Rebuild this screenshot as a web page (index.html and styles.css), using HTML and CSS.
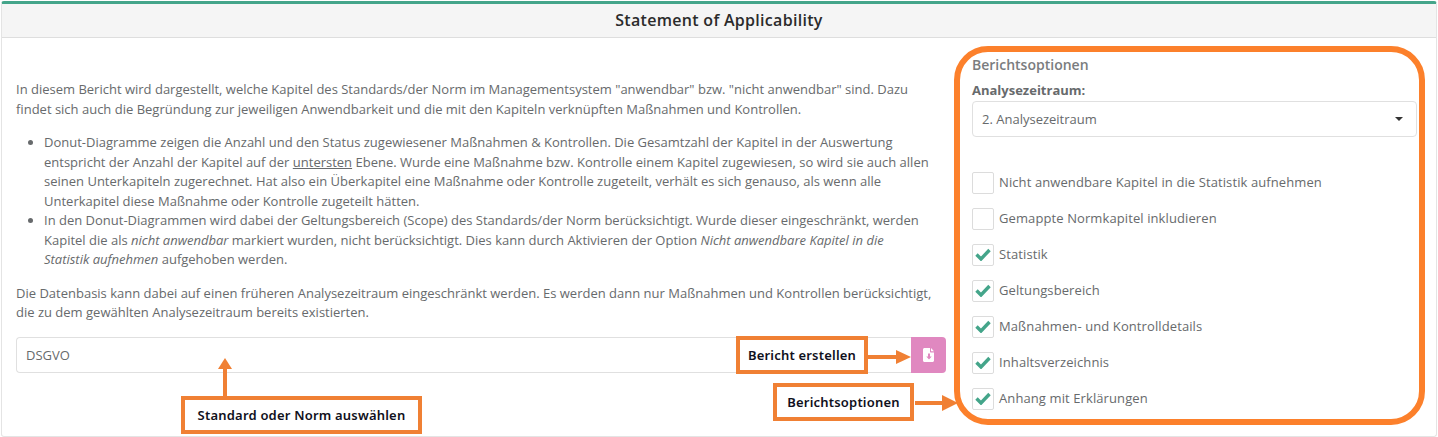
FILE: index.html
```html
<!DOCTYPE html>
<html lang="de">
<head>
    <meta charset="UTF-8">
    <meta name="viewport" content="width=device-width, initial-scale=1.0">
    <title>Statement of Applicability</title>
    <link rel="stylesheet" href="styles.css">
</head>
<body>
    <div class="card">
        <div class="card-header">Statement of Applicability</div>
        <div class="card-body">
            <div class="intro">
                <p>In diesem Bericht wird dargestellt, welche Kapitel des Standards/der Norm im Managementsystem "anwendbar" bzw. "nicht anwendbar" sind. Dazu findet sich auch die Begründung zur jeweiligen Anwendbarkeit und die mit den Kapiteln verknüpften Maßnahmen und Kontrollen.</p>
                <ul>
                    <li>Donut-Diagramme zeigen die Anzahl und den Status zugewiesener Maßnahmen &amp; Kontrollen. Die Gesamtzahl der Kapitel in der Auswertung entspricht der Anzahl der Kapitel auf der <u>untersten</u> Ebene. Wurde eine Maßnahme bzw. Kontrolle einem Kapitel zugewiesen, so wird sie auch allen seinen Unterkapiteln zugerechnet. Hat also ein Überkapitel eine Maßnahme oder Kontrolle zugeteilt, verhält es sich genauso, als wenn alle Unterkapitel diese Maßnahme oder Kontrolle zugeteilt hätten.</li>
                    <li>In den Donut-Diagrammen wird dabei der Geltungsbereich (Scope) des Standards/der Norm berücksichtigt. Wurde dieser eingeschränkt, werden Kapitel die als <em>nicht anwendbar</em> markiert wurden, nicht berücksichtigt. Dies kann durch Aktivieren der Option <em>Nicht anwendbare Kapitel in die Statistik aufnehmen</em> aufgehoben werden.</li>
                </ul>
                <p>Die Datenbasis kann dabei auf einen früheren Analysezeitraum eingeschränkt werden. Es werden dann nur Maßnahmen und Kontrollen berücksichtigt, die zu dem gewählten Analysezeitraum bereits existierten.</p>
                <div class="input-group">
                    <div class="input">DSGVO</div>
                    <button class="create-btn" aria-label="Bericht erstellen">
                        <svg width="12" height="14" viewBox="0 0 12 14">
                            <path fill="#fff" fill-rule="evenodd" d="M1.500 0H7v3.500c0 .6.4 1 1 1h3V12.500c0 .8-.7 1.500-1.500 1.500h-8C.7 14 0 13.300 0 12.500v-11C0 .7.700 0 1.500 0zM8 0l3 3.300H8.200L8 3.100zM5 5.500v3H3.300L6 11.500l2.700-3H7v-3z"/>
                        </svg>
                    </button>
                </div>
            </div>
            <div class="options">
                <h5>Berichtsoptionen</h5>
                <label class="field-label">Analysezeitraum:</label>
                <div class="select">2. Analysezeitraum<span class="caret"></span></div>
                <div class="checks">
                    <div class="check"><span class="box"></span>Nicht anwendbare Kapitel in die Statistik aufnehmen</div>
                    <div class="check"><span class="box"></span>Gemappte Normkapitel inkludieren</div>
                    <div class="check"><span class="box on"><svg width="16" height="13" viewBox="0 0 16 13"><path d="M1.500 6.500l4.500 4.500 8.500-9" fill="none" stroke="#44a58a" stroke-width="3.400"/></svg></span>Statistik</div>
                    <div class="check"><span class="box on"><svg width="16" height="13" viewBox="0 0 16 13"><path d="M1.500 6.500l4.500 4.500 8.500-9" fill="none" stroke="#44a58a" stroke-width="3.400"/></svg></span>Geltungsbereich</div>
                    <div class="check"><span class="box on"><svg width="16" height="13" viewBox="0 0 16 13"><path d="M1.500 6.500l4.500 4.500 8.500-9" fill="none" stroke="#44a58a" stroke-width="3.400"/></svg></span>Maßnahmen- und Kontrolldetails</div>
                    <div class="check"><span class="box on"><svg width="16" height="13" viewBox="0 0 16 13"><path d="M1.500 6.500l4.500 4.500 8.500-9" fill="none" stroke="#44a58a" stroke-width="3.400"/></svg></span>Inhaltsverzeichnis</div>
                    <div class="check"><span class="box on"><svg width="16" height="13" viewBox="0 0 16 13"><path d="M1.500 6.500l4.500 4.500 8.500-9" fill="none" stroke="#44a58a" stroke-width="3.400"/></svg></span>Anhang mit Erklärungen</div>
                </div>
            </div>
        </div>
    </div>

    <!-- annotations on top of the screenshot -->
    <div class="ring"></div>
    <div class="note note-create">Bericht erstellen</div>
    <div class="note note-options">Berichtsoptionen</div>
    <div class="note note-standard">Standard oder Norm auswählen</div>
    <svg class="arrows" width="1438" height="437" viewBox="0 0 1438 437">
        <g fill="#f08034">
            <rect x="868" y="355" width="30" height="4"/>
            <path d="M896 350l15 7-15 7z"/>
            <rect x="915" y="401" width="30" height="4"/>
            <path d="M942 395l16 8-16 8z"/>
            <rect x="223" y="368" width="4" height="28"/>
            <path d="M218 369l7-11 7 11z"/>
        </g>
    </svg>
</body>
</html>
```

FILE: styles.css
```css
html, body {
    margin: 0;
    height: 437px;
    overflow: hidden;
}
body {
    position: relative;
    background: white;
    font-family: "Open Sans", sans-serif;
    font-size: 13px;
    line-height: 19.5px;
    color: #676a6c;
}
.card {
    box-sizing: border-box;
    margin: 1px 1px 0 1px;
    height: 436px;
    border: 1px solid #e4e4e4;
    border-top: 3px solid #44a58a;
    border-radius: 3px;
    background: white;
}
.card-header {
    height: 33px;
    line-height: 33px;
    background: #f5f5f5;
    border-bottom: 1px solid #dedede;
    text-align: center;
    font-size: 16px;
    font-weight: 600;
    letter-spacing: .3px;
    color: #2b2b2b;
}
.card-body {
    display: flex;
}
.intro {
    width: 930px;
    padding: 42px 0 0 14px;
}
.intro p {
    margin: 0 0 14px;
}
.intro ul {
    margin: 0 16px 14px 0;
    padding-left: 28px;
}
.input-group {
    display: flex;
    margin-top: 14px;
}
.input {
    flex: 1;
    height: 36px;
    line-height: 34px;
    box-sizing: border-box;
    padding-left: 9px;
    border: 1px solid #e0e0e0;
    border-right: none;
    border-radius: 4px 0 0 4px;
}
.create-btn {
    width: 35px;
    height: 36px;
    padding: 0;
    border: none;
    border-radius: 0 4px 4px 0;
    background: #e088c0;
    display: flex;
    align-items: center;
    justify-content: center;
}
.options {
    width: 445px;
    margin-left: 26px;
    padding-top: 17px;
}
.options h5 {
    margin: 0;
    font-size: 14px;
    font-weight: 600;
    line-height: 20px;
    color: #7a7c7e;
}
.field-label {
    display: block;
    margin-top: 6px;
    font-weight: 700;
}
.select {
    position: relative;
    box-sizing: border-box;
    height: 36px;
    padding-left: 9px;
    line-height: 34px;
    border: 1px solid #e0e0e0;
    border-radius: 4px;
}
.caret {
    position: absolute;
    right: 13px;
    top: 15px;
    border-top: 4px solid #333;
    border-left: 4px solid transparent;
    border-right: 4px solid transparent;
}
.checks {
    margin-top: 35px;
    letter-spacing: .1px;
}
.check {
    display: flex;
    align-items: center;
    height: 22px;
    margin-bottom: 14px;
}
.box {
    box-sizing: border-box;
    width: 22px;
    height: 22px;
    margin-right: 5px;
    border: 1px solid #dcdcdc;
    border-radius: 2px;
    display: flex;
    align-items: center;
    justify-content: center;
}
.ring {
    position: absolute;
    left: 954px;
    top: 46px;
    width: 471px;
    height: 379px;
    box-sizing: border-box;
    border: 6px solid #fc802b;
    border-radius: 34px;
}
.note {
    position: absolute;
    box-sizing: border-box;
    height: 38px;
    line-height: 30px;
    border: 4px solid #f08034;
    background: white;
    text-align: center;
    font-family: "Noto Sans", sans-serif;
    font-size: 13px;
    font-weight: 600;
    letter-spacing: .2px;
    color: #101020;
}
.note-create {
    left: 736px;
    top: 336px;
    width: 132px;
}
.note-options {
    left: 773px;
    top: 383px;
    width: 141px;
}
.note-standard {
    left: 181px;
    top: 396px;
    width: 241px;
}
.arrows {
    position: absolute;
    left: 0;
    top: 0;
}
```
